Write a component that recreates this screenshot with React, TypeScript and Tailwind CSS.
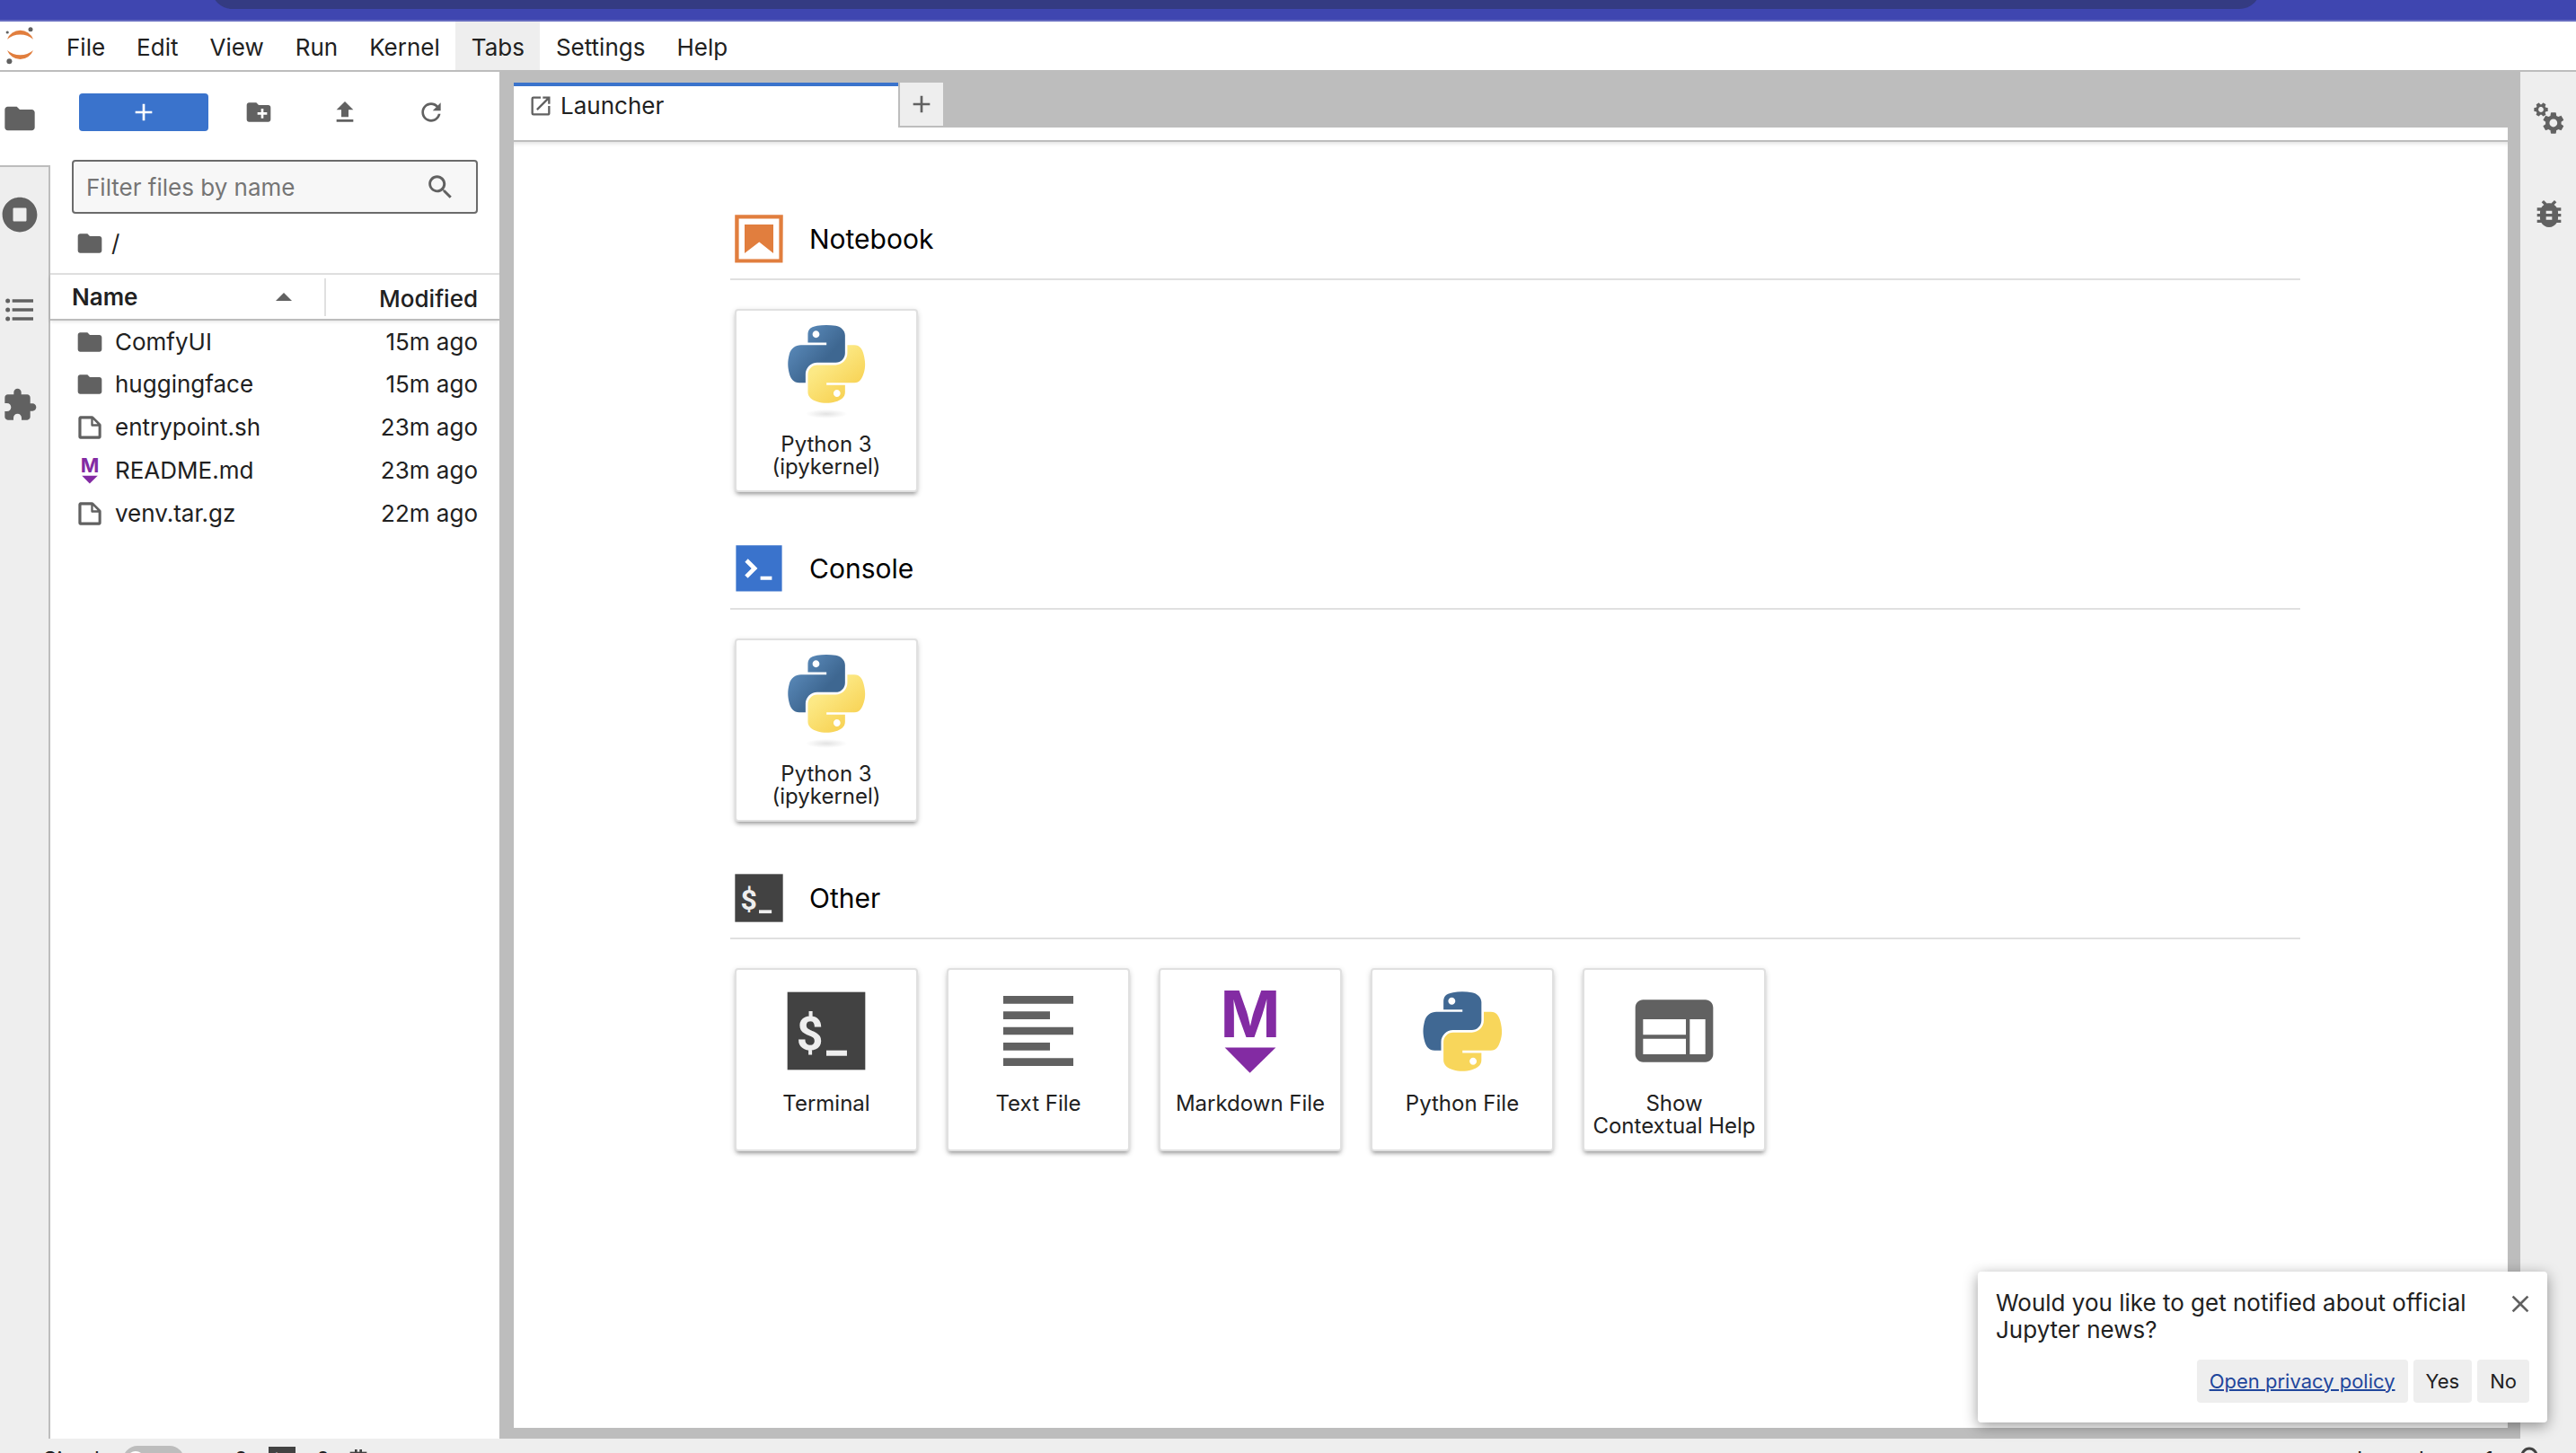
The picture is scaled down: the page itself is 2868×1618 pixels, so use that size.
import type { ReactNode } from "react";

const MENUS = ["File", "Edit", "View", "Run", "Kernel", "Tabs", "Settings", "Help"];

type FileKind = "folder" | "file" | "markdown";

interface FileEntry {
  name: string;
  kind: FileKind;
  modified: string;
}

const FILES: FileEntry[] = [
  { name: "ComfyUI", kind: "folder", modified: "15m ago" },
  { name: "huggingface", kind: "folder", modified: "15m ago" },
  { name: "entrypoint.sh", kind: "file", modified: "23m ago" },
  { name: "README.md", kind: "markdown", modified: "23m ago" },
  { name: "venv.tar.gz", kind: "file", modified: "22m ago" },
];

const PATHS = {
  folder: "M10 4H4c-1.1 0-1.99.9-1.99 2L2 18c0 1.1.9 2 2 2h16c1.1 0 2-.9 2-2V8c0-1.1-.9-2-2-2h-8l-2-2z",
  newFolder:
    "M20 6h-8l-2-2H4c-1.11 0-1.99.89-1.99 2L2 18c0 1.11.89 2 2 2h16c1.11 0 2-.89 2-2V8c0-1.11-.89-2-2-2zm-1 8h-3v3h-2v-3h-3v-2h3V9h2v3h3v2z",
  plus: "M19 13h-6v6h-2v-6H5v-2h6V5h2v6h6v2z",
  upload: "M9 16h6v-6h4l-7-7-7 7h4zm-4 2h14v2H5z",
  list: "M7,5H21V7H7V5M7,13V11H21V13H7M4,4.5A1.5,1.5 0 0,1 5.5,6A1.5,1.5 0 0,1 4,7.5A1.5,1.5 0 0,1 2.5,6A1.5,1.5 0 0,1 4,4.5M4,10.5A1.5,1.5 0 0,1 5.5,12A1.5,1.5 0 0,1 4,13.5A1.5,1.5 0 0,1 2.5,12A1.5,1.5 0 0,1 4,10.5M7,19V17H21V19H7M4,16.5A1.5,1.5 0 0,1 5.5,18A1.5,1.5 0 0,1 4,19.5A1.5,1.5 0 0,1 2.5,18A1.5,1.5 0 0,1 4,16.5Z",
  puzzle:
    "M20.5 11H19V7c0-1.1-.9-2-2-2h-4V3.5C13 2.12 11.88 1 10.5 1S8 2.12 8 3.5V5H4c-1.1 0-1.99.9-1.99 2v3.8H3.5c1.49 0 2.7 1.21 2.7 2.7s-1.21 2.7-2.7 2.7H2V20c0 1.1.9 2 2 2h3.8v-1.5c0-1.49 1.21-2.7 2.7-2.7 1.49 0 2.7 1.21 2.7 2.7V22H17c1.1 0 2-.9 2-2v-4h1.5c1.38 0 2.5-1.12 2.5-2.5S21.88 11 20.5 11z",
  launcher:
    "M19 19H5V5h7V3H5a2 2 0 00-2 2v14a2 2 0 002 2h14c1.1 0 2-.9 2-2v-7h-2v7zM14 3v2h3.59l-9.83 9.83 1.41 1.41L19 6.41V10h2V3h-7z",
  textLines: "M15 15H3v2h12v-2zm0-8H3v2h12V7zM3 13h18v-2H3v2zm0 8h18v-2H3v2zM3 3v2h18V3H3z",
  inspector:
    "M20 4H4c-1.1 0-1.99.9-1.99 2L2 18c0 1.1.9 2 2 2h16c1.1 0 2-.9 2-2V6c0-1.1-.9-2-2-2zm-5 14H4v-4h11v4zm0-5H4V9h11v4zm5 5h-4V9h4v9z",
  bug: "M20 8h-2.81c-.45-.78-1.07-1.45-1.82-1.96L17 4.41 15.59 3l-2.17 2.17C12.96 5.06 12.49 5 12 5c-.49 0-.96.06-1.41.17L8.41 3 7 4.41l1.62 1.63C7.88 6.55 7.26 7.22 6.81 8H4v2h2.09c-.05.33-.09.66-.09 1v1H4v2h2v1c0 .34.04.67.09 1H4v2h2.81c1.04 1.79 2.97 3 5.19 3s4.15-1.21 5.19-3H20v-2h-2.09c.05-.33.09-.66.09-1v-1h2v-2h-2v-1c0-.34-.04-.67-.09-1H20V8zm-6 8h-4v-2h4v2zm0-4h-4v-2h4v2z",
  close: "M19 6.41L17.59 5 12 10.59 6.41 5 5 6.41 10.59 12 5 17.59 6.41 19 12 13.41 17.59 19 19 17.59 13.41 12z",
  gear: "M19.14 12.94c.04-.3.06-.61.06-.94 0-.32-.02-.64-.07-.94l2.03-1.58c.18-.14.23-.41.12-.61l-1.92-3.32c-.12-.22-.37-.29-.59-.22l-2.39.96c-.5-.38-1.03-.7-1.62-.94l-.36-2.54c-.04-.24-.24-.41-.48-.41h-3.84c-.24 0-.43.17-.47.41l-.36 2.54c-.59.24-1.13.57-1.62.94l-2.39-.96c-.22-.08-.47 0-.59.22L2.74 8.87c-.12.21-.08.47.12.61l2.03 1.58c-.05.3-.09.63-.09.94s.02.64.07.94l-2.03 1.58c-.18.14-.23.41-.12.61l1.92 3.32c.12.22.37.29.59.22l2.39-.96c.5.38 1.03.7 1.62.94l.36 2.54c.05.24.24.41.48.41h3.84c.24 0 .44-.17.47-.41l.36-2.54c.59-.24 1.13-.56 1.62-.94l2.39.96c.22.08.47 0 .59-.22l1.92-3.32c.12-.22.07-.47-.12-.61l-2.01-1.58zM12 15.6c-1.98 0-3.6-1.62-3.6-3.6s1.62-3.6 3.6-3.6 3.6 1.62 3.6 3.6-1.62 3.6-3.6 3.6z",
};

const PYTHON_BLUE =
  "M 54.918785,0 C 50.335132,0.022 45.957846,0.413 42.106285,1.0946693 30.760069,3.0991731 28.700036,7.2947714 28.700035,15.032169 v 10.21875 h 26.8125 v 3.40625 h -26.8125 -10.0625 c -7.792459,0 -14.6157588,4.683717 -16.7499998,13.59375 -2.46181998,10.212966 -2.57101508,16.586023 0,27.25 1.9059283,7.937852 6.4575432,13.593748 14.2499998,13.59375 h 9.21875 v -12.25 c 0,-8.849902 7.657144,-16.656248 16.75,-16.65625 h 26.78125 c 7.454951,0 13.406253,-6.138164 13.40625,-13.625 v -25.53125 c 0,-7.2663386 -6.12998,-12.7247771 -13.40625,-13.9374997 C 64.281548,0.32794397 59.502438,-0.02037903 54.918785,0 Z m -14.5,8.21875 c 2.769547,0 5.03125,2.2986456 5.03125,5.1249996 0,2.816336 -2.261703,5.09375 -5.03125,5.09375 -2.779476,0 -5.03125,-2.277415 -5.03125,-5.09375 0,-2.826353 2.251774,-5.1249996 5.03125,-5.1249996 z";
const PYTHON_YELLOW =
  "m 85.637535,28.657169 v 11.90625 c 0,9.230755 -7.825895,16.999999 -16.75,17 h -26.78125 c -7.335833,0 -13.406249,6.278483 -13.40625,13.625 v 25.531247 c 0,7.266344 6.318588,11.540324 13.40625,13.625004 8.487331,2.49561 16.626237,2.94663 26.78125,0 6.750155,-1.95439 13.406253,-5.88761 13.40625,-13.625004 V 86.500919 h -26.78125 v -3.40625 h 26.78125 13.406254 c 7.792461,0 10.696251,-5.435408 13.406241,-13.59375 2.79933,-8.398886 2.68022,-16.475776 0,-27.25 -1.92578,-7.757441 -5.60387,-13.59375 -13.406241,-13.59375 z m -15.0625,64.65625 c 2.779478,0 5.03125,2.277417 5.03125,5.093747 0,2.826354 -2.251775,5.125004 -5.03125,5.125004 -2.76955,0 -5.03125,-2.29865 -5.03125,-5.125004 0,-2.81633 2.261697,-5.093747 5.03125,-5.093747 z";

function Icon({ name, className }: { name: keyof typeof PATHS; className: string }) {
  return (
    <svg viewBox="0 0 24 24" fill="currentColor" className={className} aria-hidden="true">
      <path d={PATHS[name]} />
    </svg>
  );
}

function JupyterLogo() {
  return (
    <svg viewBox="0 0 44 54" className="h-[54px] w-11 shrink-0" aria-label="Jupyter" role="img">
      <path d="M8 19.7A15.5 15.5 0 0 1 37 19.7A22.8 22.8 0 0 0 8 19.7z" fill="#e17e3e" />
      <path d="M8 32A15.5 15.5 0 0 0 37 32A22.8 22.8 0 0 1 8 32z" fill="#e17e3e" />
      <circle cx="34" cy="8.7" r="2.5" fill="#616161" />
      <circle cx="8.2" cy="12" r="1.6" fill="#616161" />
      <circle cx="10.4" cy="44.2" r="3" fill="#616161" />
    </svg>
  );
}

function RunningIcon() {
  return (
    <svg viewBox="0 0 512 512" fill="currentColor" className="size-10" aria-hidden="true">
      <path d="M256 8C119 8 8 119 8 256s111 248 248 248 248-111 248-248S393 8 256 8zm96 328c0 8.8-7.2 16-16 16H176c-8.8 0-16-7.2-16-16V176c0-8.8 7.2-16 16-16h160c8.8 0 16 7.2 16 16v160z" />
    </svg>
  );
}

function RefreshIcon() {
  return (
    <svg viewBox="0 0 18 18" fill="currentColor" className="size-8" aria-hidden="true">
      <path d="M9 13.5c-2.49 0-4.5-2.01-4.5-4.5S6.51 4.5 9 4.5c1.24 0 2.36.52 3.17 1.33L10 8h5V3l-1.76 1.76C12.15 3.68 10.66 3 9 3 5.69 3 3.01 5.69 3.01 9S5.69 15 9 15c2.97 0 5.43-2.16 5.9-5h-1.52c-.46 2-2.24 3.5-4.38 3.5z" />
    </svg>
  );
}

function SearchIcon() {
  return (
    <svg viewBox="0 0 18 18" fill="currentColor" className="size-8 shrink-0" aria-hidden="true">
      <path d="M12.1,10.9h-0.7l-0.2-0.2c0.8-0.9,1.3-2.2,1.3-3.5c0-3-2.4-5.4-5.4-5.4S1.8,4.2,1.8,7.1s2.4,5.4,5.4,5.4c1.3,0,2.5-0.5,3.5-1.3l0.2,0.2v0.7l4.1,4.1l1.2-1.2L12.1,10.9z M7.1,10.9c-2.1,0-3.7-1.7-3.7-3.7s1.7-3.7,3.7-3.7s3.7,1.7,3.7,3.7S9.2,10.9,7.1,10.9z" />
    </svg>
  );
}

function GearsIcon() {
  return (
    <svg viewBox="0 0 24 24" fill="currentColor" className="size-10" aria-hidden="true">
      <path d={PATHS.gear} transform="translate(14.9 15) scale(.73) translate(-12 -12)" />
      <path d={PATHS.gear} transform="translate(6.6 6) rotate(30) scale(.48) translate(-12 -12)" />
    </svg>
  );
}

function BellIcon() {
  return (
    <svg viewBox="0 0 16 16" fill="none" stroke="#424242" strokeWidth="1.5" className="ml-6 size-8" aria-hidden="true">
      <path d="M2 13C4 11.5 3.8 9 3.8 6.2A4.2 4.7 0 0 1 12.2 6.2C12.2 9 12 11.5 14 13z" />
      <path d="M6.5 14.8h3" />
    </svg>
  );
}

function MarkdownIcon({ className }: { className: string }) {
  return (
    <svg viewBox="0 0 22 22" fill="#832ba3" overflow="visible" className={className} aria-hidden="true">
      <text x="11" y="12.4" textAnchor="middle" fontSize="15.2" className="font-[Inter,sans-serif] font-bold">
        M
      </text>
      <path d="M5 14.9h12l-6.1 6z" />
    </svg>
  );
}

function FileIcon({ kind }: { kind: FileKind }) {
  if (kind === "folder") return <Icon name="folder" className="size-8" />;
  if (kind === "markdown") return <MarkdownIcon className="size-8" />;
  return (
    <svg viewBox="0 0 22 22" fill="currentColor" className="size-8" aria-hidden="true">
      <path d="M19.3 8.2l-5.5-5.5c-.3-.3-.7-.5-1.2-.5H3.9c-.8.1-1.6.9-1.6 1.8v14.1c0 .9.7 1.6 1.6 1.6h14.2c.9 0 1.6-.7 1.6-1.6V9.4c.1-.5-.1-.9-.4-1.2zm-5.8-3.3l3.4 3.6h-3.4V4.9zm3.9 12.7H4.7c-.1 0-.2 0-.2-.2V4.7c0-.2.1-.3.2-.3h7.2v4.4s0 .8.3 1.1c.3.3 1.1.3 1.1.3h4.3v7.2s-.1.2-.2.2z" />
    </svg>
  );
}

function TerminalIcon({ className }: { className: string }) {
  return (
    <svg viewBox="0 0 24 24" className={className} aria-hidden="true">
      <rect x="2" y="2" width="20" height="20" fill="#424242" />
      <text x="4.3" y="16.8" fontSize="12" fill="#eeeeee" className="font-[Roboto,sans-serif] font-bold">
        $
      </text>
      <rect x="12" y="17" width="5.3" height="1.4" fill="#eeeeee" />
    </svg>
  );
}

function NotebookIcon() {
  return (
    <svg viewBox="0 0 22 22" fill="#e17e3e" className="size-16" aria-hidden="true">
      <path d="M18.7 3.3v15.4H3.3V3.3h15.4m1.5-1.5H1.8v18.3h18.3l.1-18.3z" />
      <path d="M16.5 16.5l-5.4-4.3-5.6 4.3v-11h11z" />
    </svg>
  );
}

function ConsoleIcon() {
  return (
    <svg viewBox="0 0 200 200" className="size-16" aria-hidden="true">
      <path d="M20 19.8h160v159.9H20z" fill="#3a73cc" />
      <path
        d="M105 127.3h40v12.8h-40zM51.1 77L74 99.9l-23.3 23.3 10.5 10.5 23.3-23.3L95 99.9 84.5 89.4 61.6 66.5z"
        fill="#fff"
      />
    </svg>
  );
}

function KernelIcon() {
  return (
    <svg viewBox="-12 0 134.6 134.6" className="size-[104px]" aria-hidden="true">
      <defs>
        <linearGradient id="py-blue" x1="0" y1="0" x2="0.65" y2="0.6">
          <stop offset="0" stopColor="#6496c8" />
          <stop offset="1" stopColor="#3e6791" />
        </linearGradient>
        <linearGradient id="py-yellow" x1="0.3" y1="0.3" x2="0.7" y2="0.8">
          <stop offset="0" stopColor="#fce985" />
          <stop offset="1" stopColor="#f8d458" />
        </linearGradient>
        <radialGradient id="py-shadow">
          <stop offset="0" stopColor="#b8b8b8" stopOpacity="0.4" />
          <stop offset="1" stopColor="#b8b8b8" stopOpacity="0" />
        </radialGradient>
      </defs>
      <path d={PYTHON_BLUE} fill="url(#py-blue)" />
      <path d={PYTHON_YELLOW} fill="url(#py-yellow)" />
      <ellipse cx="55.5" cy="128" rx="30" ry="6.5" fill="url(#py-shadow)" />
    </svg>
  );
}

function PythonFileIcon() {
  return (
    <svg viewBox="-10.8 -10.5 132 132" className="size-[104px]" aria-hidden="true">
      <path d={PYTHON_BLUE} fill="#406893" />
      <path d={PYTHON_YELLOW} fill="#f8d65b" />
    </svg>
  );
}

interface CardProps {
  label: string;
  icon: ReactNode;
}

function Card({ label, icon }: CardProps) {
  return (
    <button
      type="button"
      className="flex h-[204px] w-[204px] flex-col items-center rounded-sm border-2 border-[#e0e0e0] bg-white pt-4 shadow-[0_4px_4px_-2px_rgba(0,0,0,0.3),0_2px_6px_rgba(0,0,0,0.16)]"
    >
      {icon}
      <span className="mt-4 w-full px-1.5 text-center text-[24px] leading-[25px] text-[#212121]">{label}</span>
    </button>
  );
}

function Section({ title, icon, cards }: { title: string; icon: ReactNode; cards: CardProps[] }) {
  return (
    <section className="mb-[33px]">
      <div className="flex items-center gap-6 border-b-2 border-[#e0e0e0] pb-3">
        {icon}
        <h2 className="text-[30px] leading-10 text-black">{title}</h2>
      </div>
      <div className="flex flex-wrap gap-8 px-[5px] pt-8 pb-5">
        {cards.map((card) => (
          <Card key={card.label} {...card} />
        ))}
      </div>
    </section>
  );
}

function MenuBar() {
  return (
    <header className="flex h-14 shrink-0 items-stretch border-b-2 border-[#bdbdbd] bg-white">
      <JupyterLogo />
      <nav className="ml-3 flex">
        {MENUS.map((menu) => (
          <button
            key={menu}
            type="button"
            className={menu === "Tabs" ? "bg-[#eeeeee] pt-1 pr-[17px] pl-[18px]" : "pt-1 pr-[17px] pl-[18px]"}
          >
            {menu}
          </button>
        ))}
      </nav>
    </header>
  );
}

function ActivityBar() {
  return (
    <nav className="flex w-14 shrink-0 flex-col bg-[#eeeeee] text-[#616161]">
      <button type="button" aria-label="File Browser" className="h-[104px] bg-white pl-0.5">
        <Icon name="folder" className="size-10" />
      </button>
      <div className="flex flex-1 flex-col border-t-2 border-r-2 border-[#bdbdbd]">
        <button type="button" aria-label="Running Terminals and Kernels" className="h-[106px] pl-0.5">
          <RunningIcon />
        </button>
        <button type="button" aria-label="Table of Contents" className="h-[106px] pl-0.5">
          <Icon name="list" className="size-10" />
        </button>
        <button type="button" aria-label="Extension Manager" className="h-[106px] pl-0.5">
          <Icon name="puzzle" className="size-10" />
        </button>
      </div>
    </nav>
  );
}

function FileBrowser() {
  return (
    <aside className="flex w-[500px] shrink-0 flex-col bg-white text-[#616161]">
      <div className="flex items-center pt-6 pr-7 pl-8">
        <button
          type="button"
          aria-label="New Launcher"
          className="mr-2 flex h-[42px] w-36 items-center justify-center rounded-sm bg-[#3a73cc] text-white"
        >
          <Icon name="plus" className="size-8" />
        </button>
        <button type="button" aria-label="New Folder" className="flex flex-1 justify-center">
          <Icon name="newFolder" className="size-8" />
        </button>
        <button type="button" aria-label="Upload Files" className="flex flex-1 justify-center">
          <Icon name="upload" className="size-8" />
        </button>
        <button type="button" aria-label="Refresh" className="flex flex-1 justify-center">
          <RefreshIcon />
        </button>
      </div>
      <label className="mx-6 mt-8 flex h-[60px] items-center rounded-sm border-2 border-[#6b6b6b] bg-[#f7f7f7] pr-6 pl-3.5">
        <input
          type="text"
          aria-label="Filter files by name"
          placeholder="Filter files by name"
          className="min-w-0 flex-1 bg-transparent pt-0.5 outline-none placeholder:text-[#757575]"
        />
        <SearchIcon />
      </label>
      <div className="flex h-[68px] items-center gap-2 border-b-2 border-[#e0e0e0] pl-7">
        <Icon name="folder" className="size-8" />
        <span className="text-[#212121]">/</span>
      </div>
      <table className="w-full border-collapse text-[#212121]">
        <thead>
          <tr className="h-[50px] border-b-2 border-[#bdbdbd] shadow-[0_2px_4px_rgba(0,0,0,0.12)]">
            <th className="p-0 text-left font-semibold">
              <button
                type="button"
                className="flex h-[42px] w-full items-center justify-between border-r-2 border-[#e0e0e0] pr-9 pl-6"
              >
                Name
                <svg viewBox="0 0 18 9" className="h-[9px] w-[18px]" fill="#616161" aria-hidden="true">
                  <path d="M0 9L9 0l9 9z" />
                </svg>
              </button>
            </th>
            <th className="w-[193px] pt-1 pr-6 pb-0 pl-0 text-right font-medium">Modified</th>
          </tr>
        </thead>
        <tbody>
          {FILES.map((file) => (
            <tr key={file.name} className="h-12">
              <td className="p-0">
                <div className="flex items-center gap-3 pl-7">
                  <span className="text-[#616161]">
                    <FileIcon kind={file.kind} />
                  </span>
                  {file.name}
                </div>
              </td>
              <td className="py-0 pr-6 pl-0 text-right">{file.modified}</td>
            </tr>
          ))}
        </tbody>
      </table>
    </aside>
  );
}

function Launcher() {
  const kernel = { label: "Python 3 (ipykernel)", icon: <KernelIcon /> };

  return (
    <main className="flex min-w-0 flex-1 flex-col bg-[#bdbdbd] pt-3 pr-3.5 pb-3 pl-4">
      <div className="flex h-[50px] shrink-0 gap-0.5">
        <div className="flex w-[428px] items-center gap-2 border-t-4 border-[#3a73cc] bg-white pb-0.5 pl-4">
          <Icon name="launcher" className="size-7 text-[#616161]" />
          <span>Launcher</span>
        </div>
        <button
          type="button"
          aria-label="New tab"
          className="flex size-12 items-center justify-center bg-[#eeeeee] text-[#616161]"
        >
          <Icon name="plus" className="size-8" />
        </button>
      </div>
      <div className="h-4 shrink-0 border-b-2 border-[#bdbdbd] bg-white" />
      <div className="min-h-0 flex-1 overflow-hidden bg-white pt-[76px] pr-[231px] pl-[241px] shadow-[inset_0_4px_4px_-2px_rgba(0,0,0,0.12)]">
        <Section title="Notebook" icon={<NotebookIcon />} cards={[kernel]} />
        <Section title="Console" icon={<ConsoleIcon />} cards={[kernel]} />
        <Section
          title="Other"
          icon={<TerminalIcon className="size-16" />}
          cards={[
            { label: "Terminal", icon: <TerminalIcon className="size-[104px]" /> },
            { label: "Text File", icon: <Icon name="textLines" className="size-[104px] text-[#616161]" /> },
            { label: "Markdown File", icon: <MarkdownIcon className="size-[104px]" /> },
            { label: "Python File", icon: <PythonFileIcon /> },
            {
              label: "Show Contextual Help",
              icon: <Icon name="inspector" className="size-[104px] text-[#616161]" />,
            },
          ]}
        />
      </div>
    </main>
  );
}

function RightBar() {
  return (
    <nav className="flex w-[62px] shrink-0 flex-col items-center bg-[#eeeeee] pl-0.5 text-[#616161]">
      <button type="button" aria-label="Property Inspector" className="h-[104px]">
        <GearsIcon />
      </button>
      <button type="button" aria-label="Debugger" className="h-[108px]">
        <Icon name="bug" className="size-10" />
      </button>
    </nav>
  );
}

function StatusBar() {
  return (
    <footer className="flex h-12 shrink-0 items-center bg-[#eeeeee] pr-9 pl-12 text-[24px]">
      <span id="simple-label">Simple</span>
      <button
        type="button"
        role="switch"
        aria-checked="false"
        aria-labelledby="simple-label"
        className="ml-3 flex h-8 w-[68px] items-center rounded-full bg-[#bdbdbd] pl-1"
      >
        <span className="size-5 rounded-full bg-white" />
      </button>
      <span className="ml-14">0</span>
      <TerminalIcon className="ml-5 size-9" />
      <span className="ml-5">0</span>
      <svg viewBox="0 0 24 24" className="ml-4 size-8" fill="none" stroke="#424242" strokeWidth="2" aria-hidden="true">
        <rect x="6" y="6" width="12" height="12" />
        <path d="M10 3v3m4-3v3m-4 12v3m4-3v3M3 10h3m-3 4h3m12-4h3m-3 4h3" />
      </svg>
      <div className="ml-auto flex items-center">
        <span>Launcher</span>
        <span className="ml-9">1</span>
        <BellIcon />
      </div>
    </footer>
  );
}

function NewsToast() {
  return (
    <div
      role="alert"
      className="absolute right-8 bottom-[34px] w-[634px] rounded-sm bg-white pt-5 pr-5 pb-[22px] pl-5 shadow-[0_4px_16px_rgba(0,0,0,0.4)]"
    >
      <div className="flex items-start justify-between">
        <p className="w-[540px] leading-[30px]">Would you like to get notified about official Jupyter news?</p>
        <button type="button" aria-label="Close" className="-mr-1.5 text-[#616161]">
          <Icon name="close" className="size-8" />
        </button>
      </div>
      <div className="mt-[18px] flex justify-end gap-1.5 text-[22px]">
        <a
          href="#privacy"
          className="flex h-12 items-center rounded-sm bg-[#eeeeee] px-3.5 text-[#1f469c] underline decoration-2"
        >
          Open privacy policy
        </a>
        <button type="button" className="h-12 rounded-sm bg-[#eeeeee] px-3.5">
          Yes
        </button>
        <button type="button" className="h-12 rounded-sm bg-[#eeeeee] px-3.5">
          No
        </button>
      </div>
    </div>
  );
}

export default function App() {
  return (
    <div className="relative h-screen overflow-hidden bg-[#eeeeee] font-[Inter,'Liberation_Sans',sans-serif] text-[26px] leading-8 text-[#212121]">
      {/* the status bar runs past the bottom edge of the window */}
      <div className="flex h-[calc(100vh+32px)] flex-col">
        <div className="h-6 shrink-0 border-b-2 border-[#656bc0] bg-[#3f46b0] pr-[351px] pl-[235px]">
          <div className="-mt-[38px] h-12 rounded-full bg-[#343b82]" />
        </div>
        <MenuBar />
        <div className="flex min-h-0 flex-1">
          <ActivityBar />
          <FileBrowser />
          <Launcher />
          <RightBar />
        </div>
        <StatusBar />
      </div>
      <NewsToast />
    </div>
  );
}
